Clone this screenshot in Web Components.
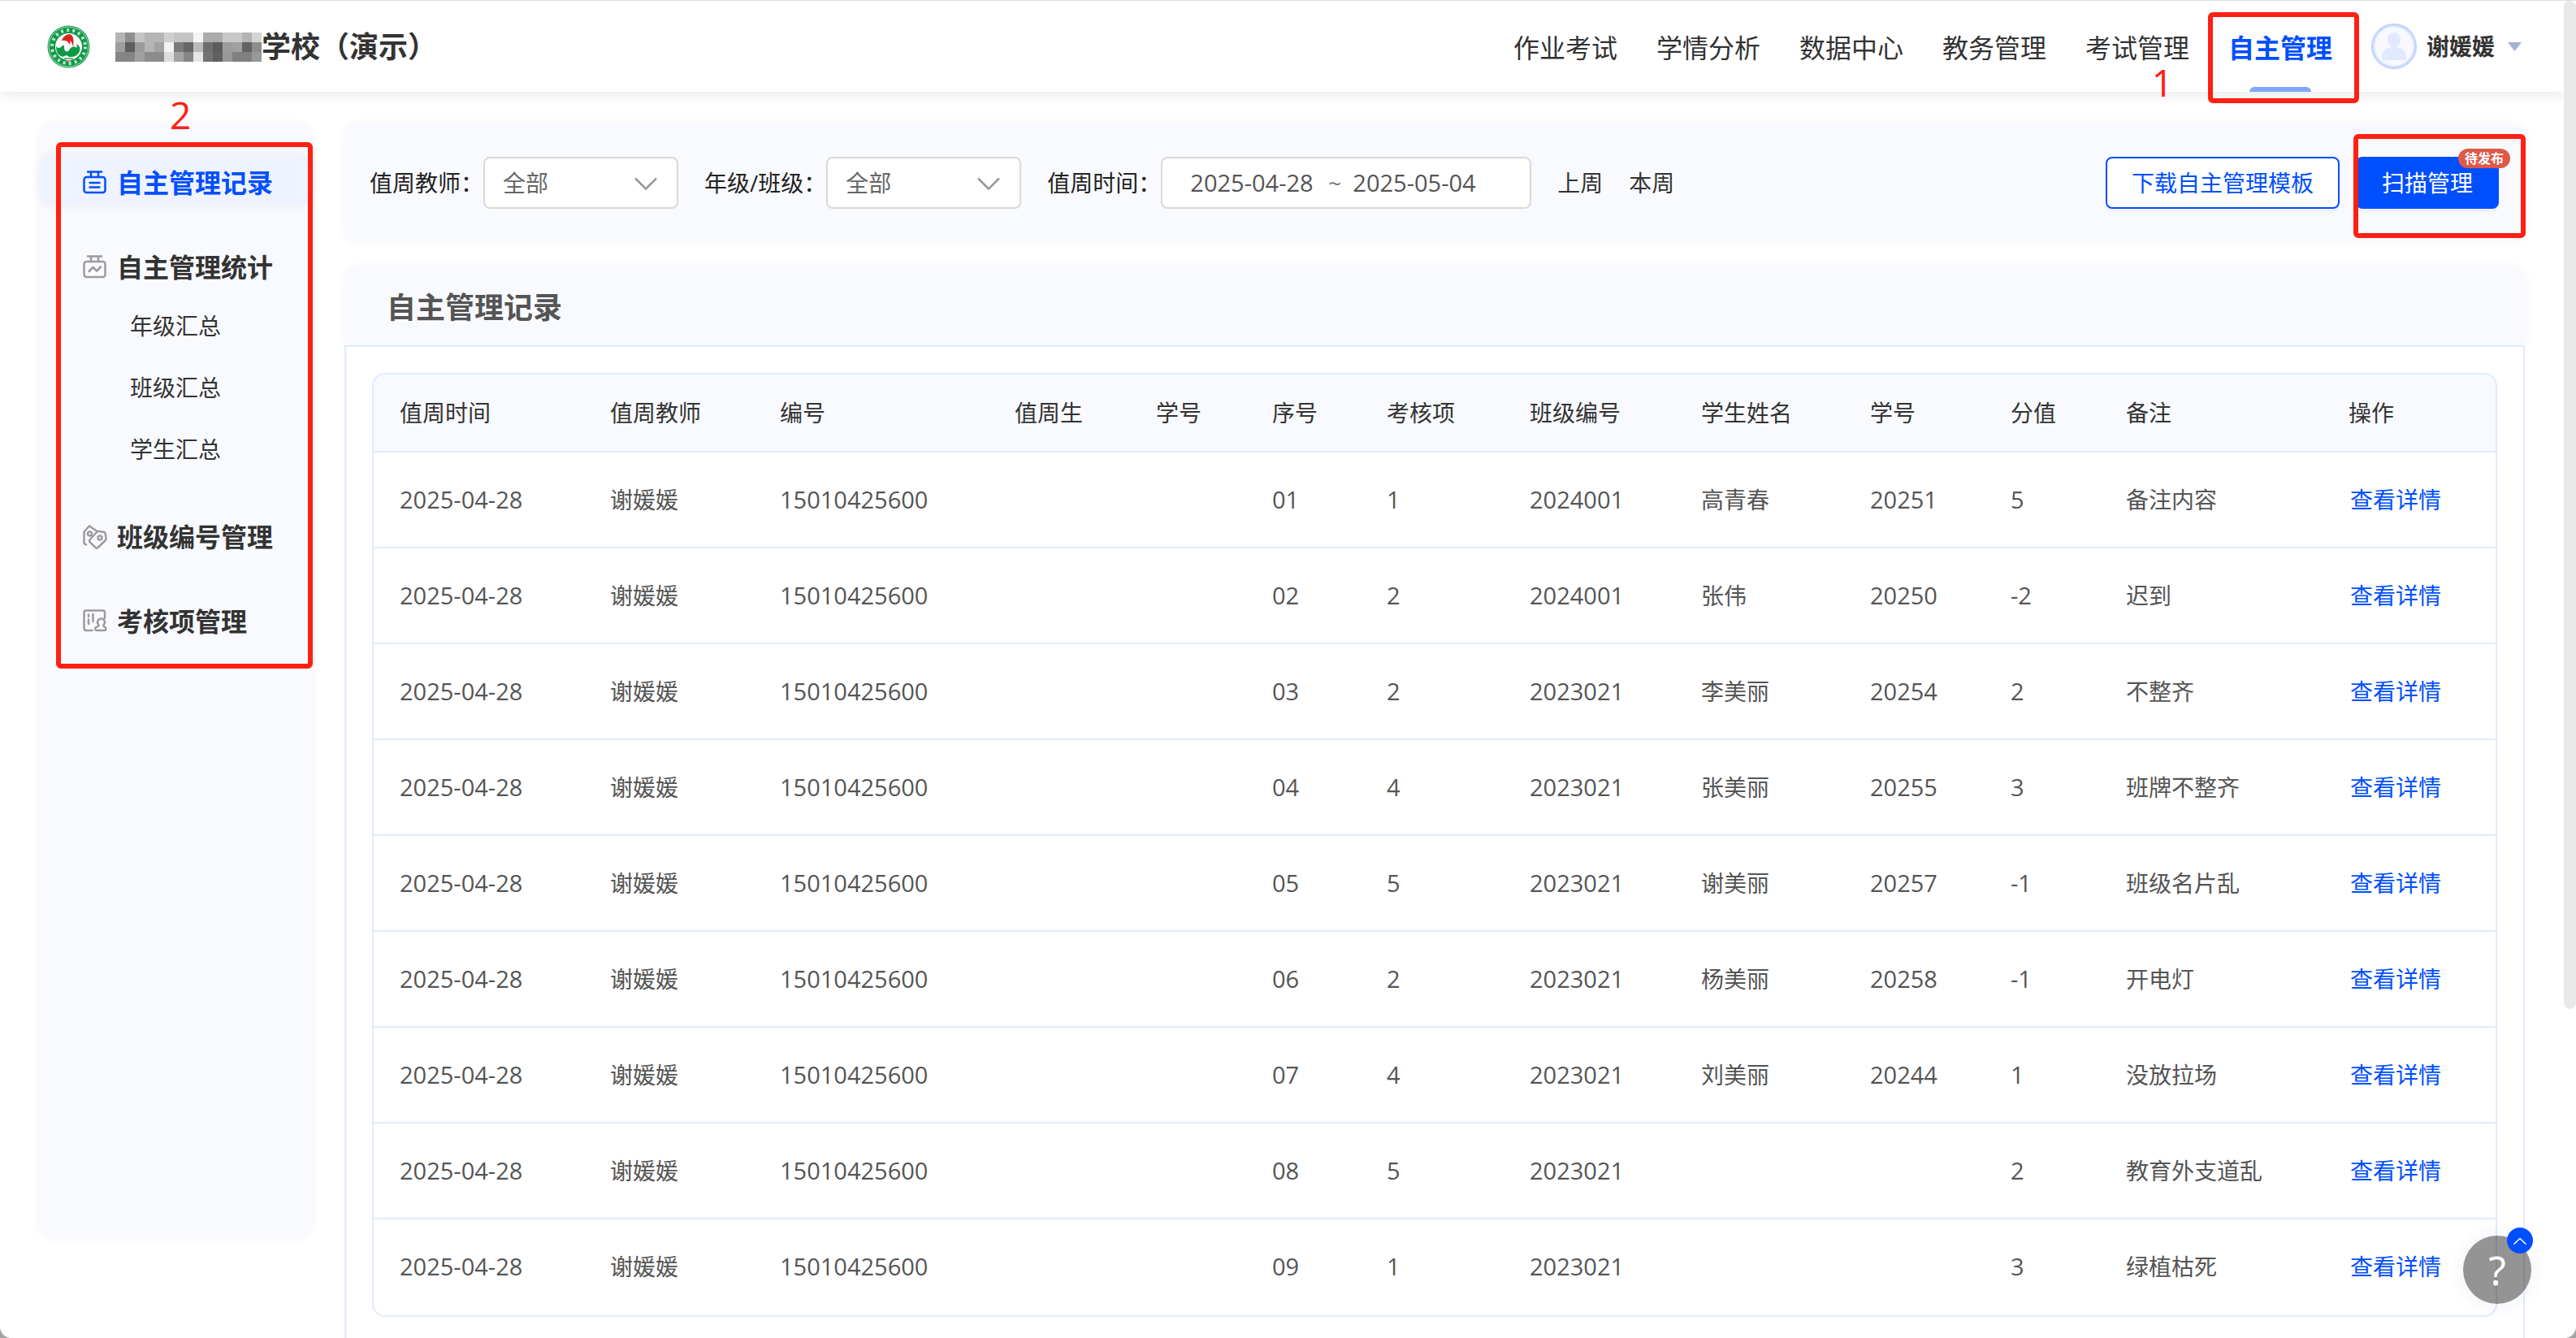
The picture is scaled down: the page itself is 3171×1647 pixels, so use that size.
<!DOCTYPE html>
<html lang="zh-CN">
<head>
<meta charset="UTF-8">
<meta name="viewport" content="width=device-width, initial-scale=1.0">
<title>自主管理记录</title>
<style>
  :root {
    --blue: #004fff;
    --line: #e1eaff;
    --panel: #f9faff;
    --text: #333;
    --text-sub: #555;
    --mark: #ff2012;
    --fs-md: 28px;
    --fs-num: 29px;
    --fs-lg: 32px;
    --fs-xl: 36px;
    --panel-shadow: 0 0 12px rgba(0, 0, 0, 0.05);
  }

  html {
    background: #a3a3a3;
  }

  body {
    margin: 0;
    color: var(--text);
    font-family: "Open Sans", "Noto Sans CJK SC", sans-serif;
    font-size: var(--fs-md);
    line-height: 40px;
  }
</style>
</head>
<body>
<app-shell>
  <app-header slot="header" school="学校（演示）" user="谢媛媛">
    <nav-link>作业考试</nav-link>
    <nav-link>学情分析</nav-link>
    <nav-link>数据中心</nav-link>
    <nav-link>教务管理</nav-link>
    <nav-link>考试管理</nav-link>
    <nav-link active>自主管理</nav-link>
  </app-header>

  <side-menu slot="side">
    <menu-item icon="record" active>自主管理记录</menu-item>
    <menu-item icon="chart">自主管理统计
      <sub-item slot="sub">年级汇总</sub-item>
      <sub-item slot="sub">班级汇总</sub-item>
      <sub-item slot="sub">学生汇总</sub-item>
    </menu-item>
    <menu-item icon="tags">班级编号管理</menu-item>
    <menu-item icon="board">考核项管理</menu-item>
  </side-menu>

  <filter-bar>
    <filter-select label="值周教师："></filter-select>
    <filter-select label="年级/班级："></filter-select>
    <date-range label="值周时间：" start="2025-04-28" end="2025-05-04"></date-range>
    <text-button>上周</text-button>
    <text-button>本周</text-button>
    <action-button slot="actions">下载自主管理模板</action-button>
    <action-button slot="actions" primary badge="待发布">扫描管理</action-button>
  </filter-bar>
  <record-panel heading="自主管理记录">
    <record-table></record-table>
  </record-panel>

  <help-button slot="float"></help-button>
</app-shell>

<script>
// 菜单图标
const icons = {
  record: `
    <rect x="1.5" y="8" width="26" height="19" rx="3"/>
    <path d="M6 1.5h17M10 2v6M19 2v6M8.5 15h12M8.5 20.5h12"/>`,
  chart: `
    <rect x="1.5" y="8" width="26" height="19" rx="3"/>
    <path d="M6 1.5h17M10 2v6M19 2v6M7.500 20l5-5 4.5 4.5 5-5"/>`,
  tags: `
    <path d="M4 24.5L1.5 23V8.5L8 1.5 16 7"/>
    <path d="M17.5 8.5Q18.5 7.5 20 8L26 9Q27.500 9.500 27.8 11L28.500 17Q28.5 18.5 27.500 19.5L18.5 28Q17 29.2 15.6 28L8.5 21.2Q7.5 20 8.5 18.5Z"/>
    <circle cx="8.500" cy="11" r="2.5"/>
    <circle cx="21" cy="16" r="2.5"/>`,
  board: `
    <path d="M27 11V4q0-2.500-2.500-2.500H4Q1.5 1.5 1.5 4v19q0 3 2.500 3h7.500M7 6.5v2.5M7 12.500v5.500M12.500 6v9"/>
    <path d="M19.5 19q-2.500-2-1-5 1.500-2.500 4-2.500t4 2.500q1.500 3-1 5v2l2.500 1.500q1 3.500-1.500 3.500h-9q-3 0-2-3.500l4-2Z"/>`
};

const records = [
  ['01', '1', '2024001', '高青春', '20251', '5', '备注内容'],
  ['02', '2', '2024001', '张伟', '20250', '-2', '迟到'],
  ['03', '2', '2023021', '李美丽', '20254', '2', '不整齐'],
  ['04', '4', '2023021', '张美丽', '20255', '3', '班牌不整齐'],
  ['05', '5', '2023021', '谢美丽', '20257', '-1', '班级名片乱'],
  ['06', '2', '2023021', '杨美丽', '20258', '-1', '开电灯'],
  ['07', '4', '2023021', '刘美丽', '20244', '1', '没放拉场'],
  ['08', '5', '2023021', '', '', '2', '教育外支道乱'],
  ['09', '1', '2023021', '', '', '3', '绿植枯死']
];

// 学校名称前的灰色马赛克
const mosaic = [
  ['b5', '8e', 'c4', 'b5', 'b5', 'd0', 'c4', 'c4', 'f5', 'ab', 'ab', 'c8', 'c8', 'b4', 'd5'],
  ['9e', '5e', '9a', 'b5', 'a3', 'f3', '7a', '66', 'bb', '6d', '5c', '9c', 'a0', '63', '8c'],
  ['85', '85', 'a0', '8c', '8c', 'dd', 'a3', '86', 'e6', '72', '60', '98', '80', '80', '98']
];

class BaseElement extends HTMLElement {
  constructor() {
    super();
    this.attachShadow({ mode: 'open' });
  }

  connectedCallback() {
    this.shadowRoot.innerHTML = this.render();
  }
}

class AppShell extends BaseElement {
  render() {
    return `
      <style>
        :host {
          display: flex;
          height: 100vh;
          overflow: hidden;
          position: relative;
          box-sizing: border-box;
          border-top: 1px solid #dedede;
          border-radius: 0 0 14px 14px;
          background: #fff;
        }
        .page { flex: 1; min-width: 0; }
        .body { display: flex; align-items: flex-start; gap: 40px; padding: 40px 48px; }
        main { flex: 1; min-width: 0; display: flex; flex-direction: column; gap: 32px; }
        .scroll { width: 15px; height: 75.4%; border-radius: 8px; background: #e9e9e9; }
      </style>
      <div class="page">
        <slot name="header"></slot>
        <div class="body">
          <slot name="side"></slot>
          <main><slot></slot></main>
        </div>
      </div>
      <div class="scroll"></div>
      <slot name="float"></slot>
    `;
  }
}

// 红色标注框
class MarkFrame extends BaseElement {
  render() {
    return `
      <style>
        :host {
          display: block;
          position: absolute;
          z-index: 5;
          box-sizing: border-box;
          border: 6px solid var(--mark);
          border-radius: 6px;
          pointer-events: none;
        }
      </style>
    `;
  }
}

class AppHeader extends BaseElement {
  render() {
    const cells = mosaic.map((row, y) => row.map((c, x) =>
      `<rect x="${x * 12}" y="${y * 12}" width="12" height="12" fill="#${c}${c}${c}"/>`
    ).join('')).join('');

    return `
      <style>
        :host {
          display: flex;
          align-items: center;
          height: 112px;
          padding: 0 52px 0 48px;
          background: #fff;
          box-shadow: 0 4px 14px rgba(20, 40, 80, 0.1);
        }
        .logo { width: 72px; display: flex; justify-content: center; }
        h1 {
          display: flex;
          align-items: center;
          margin: 0 auto 0 22px;
          padding-top: 2px;
          font-size: var(--fs-xl);
          line-height: 48px;
        }
        nav { display: flex; gap: 48px; height: 112px; }
        .user {
          display: flex;
          align-items: center;
          margin-left: 48px;
          padding: 0;
          border: 0;
          background: none;
          color: inherit;
          font: bold var(--fs-md)/40px "Open Sans", "Noto Sans CJK SC", sans-serif;
        }
        .user span { margin: 0 16px 0 12px; }
      </style>
      <div class="logo">
        <svg width="53" height="53" viewBox="0 0 53 53" fill="none">
          <circle cx="26.5" cy="26.5" r="26" fill="#0f9a48"/>
          <circle cx="26.5" cy="26.5" r="24.5" stroke="#d8f0e0" stroke-width="0.8"/>
          <circle cx="26.5" cy="26.5" r="20.5" stroke="#bfe5cc" stroke-width="4" stroke-dasharray="3 4.2"/>
          <circle cx="26.5" cy="26.5" r="16.5" fill="#fff"/>
          <path d="M11 26q3 4 7 0 3-3 3 1 0 7 5 5l3-4q4-3 6-1 3 2 1-4 6 3 4 9-3 8-13 7l-3-2-5 2Q11 37 11 26z" fill="#0f9a48"/>
          <path d="M18 19q3-8 10-8 6 2 4 16-1-6-4-8 1 3 0 5-3-6-10-5z" fill="#d9251c"/>
          <path d="M21 41h11" stroke="#6bb98a" stroke-width="2"/>
          <path d="M24 44h5" stroke="#e08a80" stroke-width="2"/>
        </svg>
      </div>
      <h1>
        <svg width="180" height="36" viewBox="0 0 180 36" aria-hidden="true">${cells}</svg>
        ${this.getAttribute('school')}
      </h1>
      <nav><slot></slot></nav>
      <button class="user">
        <svg width="56" height="56" viewBox="0 0 56 56">
          <circle cx="28" cy="28" r="27" fill="#fff" stroke="#bcd0fb" stroke-width="2"/>
          <circle cx="28" cy="28" r="25" fill="#f7f9ff" stroke="#d3e0fd" stroke-width="2"/>
          <rect x="20" y="11" width="16" height="18" rx="8" fill="#e0e9ff"/>
          <path d="M13 42q0-13 15-13t15 13q0 3-3 3H16q-3 0-3-3z" fill="#e0e9ff"/>
        </svg>
        <span>${this.getAttribute('user')}</span>
        <svg width="17" height="11" viewBox="0 0 17 11"><path d="M0 0h17l-8.5 11z" fill="#a6b3cf"/></svg>
      </button>
    `;
  }
}

class NavLink extends BaseElement {
  render() {
    const active = this.hasAttribute('active');
    return `
      <style>
        :host { display: block; position: relative; font-size: var(--fs-lg); }
        a { display: block; padding-top: 38px; color: var(--text); text-decoration: none; line-height: 40px; }
        :host([active]) a { color: var(--blue); font-weight: bold; }
        .bar {
          position: absolute;
          left: 26px;
          right: 26px;
          bottom: 0;
          height: 6px;
          border-radius: 6px 6px 0 0;
          background: #80a7ff;
        }
        mark-frame { inset: 14px -33px -14px -25px; }
        .step { position: absolute; right: 100%; top: 80px; margin-right: 68px; color: var(--mark); font-size: 46px; line-height: 40px; }
      </style>
      <a href="#"><slot></slot></a>
      ${active ? '<i class="bar"></i><mark-frame></mark-frame><span class="step">1</span>' : ''}
    `;
  }
}

class SideMenu extends BaseElement {
  render() {
    return `
      <style>
        :host {
          display: block;
          position: relative;
          flex: 0 0 336px;
          box-sizing: border-box;
          min-height: calc(100vh - 277px);
          padding-top: 36px;
          border-radius: 16px;
          background: var(--panel);
          box-shadow: var(--panel-shadow);
        }
        nav { display: flex; flex-direction: column; gap: 40px; position: relative; }
        mark-frame { inset: -14px -1px -30px 21px; }
        .step { position: absolute; left: 161px; top: -37px; color: var(--mark); font-size: 46px; line-height: 50px; }
      </style>
      <span class="step">2</span>
      <nav><slot></slot><mark-frame></mark-frame></nav>
    `;
  }
}

class MenuItem extends BaseElement {
  render() {
    return `
      <style>
        :host { display: block; }
        a {
          display: flex;
          align-items: center;
          gap: 12px;
          height: 64px;
          box-sizing: border-box;
          padding: 7px 0 0 54px;
          border-radius: 16px;
          color: var(--text);
          font-size: var(--fs-lg);
          font-weight: bold;
          text-decoration: none;
        }
        svg { color: #9c9c9c; }
        :host([active]) a { color: var(--blue); background: #eff3ff; box-shadow: 0 0 12px rgba(0, 0, 0, 0.05); }
        :host([active]) svg { color: var(--blue); }
        .sub { display: block; padding-top: 6px; margin-bottom: -6px; }
        .sub:not(.has) { display: none; }
      </style>
      <a href="#">
        <svg width="30" height="30" viewBox="0 0 30 30" fill="none" stroke="currentColor"
          stroke-width="2.5" stroke-linecap="round" stroke-linejoin="round">${icons[this.getAttribute('icon')]}</svg>
        <span><slot></slot></span>
      </a>
      <div class="sub ${this.querySelector('sub-item') ? 'has' : ''}"><slot name="sub"></slot></div>
    `;
  }
}

class SubItem extends BaseElement {
  render() {
    return `
      <style>
        :host { display: block; }
        a { display: block; padding-left: 112px; color: var(--text); line-height: 76px; text-decoration: none; }
      </style>
      <a href="#"><slot></slot></a>
    `;
  }
}

class FilterBar extends BaseElement {
  render() {
    return `
      <style>
        :host {
          display: flex;
          align-items: center;
          justify-content: space-between;
          padding: 40px 32px 40px 31px;
          border-radius: 16px;
          background: var(--panel);
          box-shadow: var(--panel-shadow);
        }
        .fields { display: flex; align-items: center; gap: 32px; }
        .actions { display: flex; gap: 20px; position: relative; }
        mark-frame { width: 212px; top: -28px; bottom: -36px; right: -33px; }
      </style>
      <div class="fields"><slot></slot></div>
      <div class="actions"><slot name="actions"></slot><mark-frame></mark-frame></div>
    `;
  }
}

class FilterSelect extends BaseElement {
  render() {
    return `
      <style>
        :host { display: flex; align-items: center; color: #222; }
        .box { display: flex; position: relative; }
        select {
          width: 240px;
          height: 64px;
          padding: 0 22px;
          border: 2px solid #d9d9d9;
          border-radius: 8px;
          background: #fff;
          color: #666;
          font: inherit;
          appearance: none;
        }
        svg { position: absolute; right: 26px; top: 25px; pointer-events: none; }
      </style>
      <label for="field">${this.getAttribute('label')}</label>
      <div class="box">
        <select id="field"><option>全部</option></select>
        <svg width="28" height="16" viewBox="0 0 28 16" fill="none" stroke="#999" stroke-width="2.5">
          <path d="M1 1.5l13 13 13-13"/>
        </svg>
      </div>
    `;
  }
}

class DateRange extends BaseElement {
  render() {
    return `
      <style>
        :host { display: flex; align-items: center; color: #222; }
        .box {
          display: flex;
          align-items: center;
          gap: 14px;
          width: 456px;
          height: 64px;
          box-sizing: border-box;
          padding: 0 34px;
          border: 2px solid #d9d9d9;
          border-radius: 8px;
          background: #fff;
          color: #777;
        }
        input {
          width: 156px;
          padding: 0;
          border: 0;
          background: none;
          color: var(--text-sub);
          font: inherit;
          font-size: var(--fs-num);
        }
      </style>
      <label for="start">${this.getAttribute('label')}</label>
      <div class="box">
        <input id="start" type="text" value="${this.getAttribute('start')}">
        <span>~</span>
        <input type="text" aria-label="结束日期" value="${this.getAttribute('end')}">
      </div>
    `;
  }
}

class TextButton extends BaseElement {
  render() {
    return `
      <style>
        :host { display: block; }
        button { padding: 0; border: 0; background: none; color: var(--text); font: inherit; }
      </style>
      <button><slot></slot></button>
    `;
  }
}

class ActionButton extends BaseElement {
  render() {
    const badge = this.getAttribute('badge');
    return `
      <style>
        :host { display: block; position: relative; }
        button {
          height: 64px;
          padding: 0 30px;
          border: 2px solid var(--blue);
          border-radius: 8px;
          background: #fff;
          color: var(--blue);
          font: inherit;
          box-shadow: 0 4px 0 rgba(0, 0, 0, 0.03);
        }
        :host([primary]) button { background: var(--blue); color: #fff; }
        .badge {
          position: absolute;
          top: -10px;
          right: -14px;
          padding: 0 8px;
          border-radius: 12px;
          background: #de5948;
          color: #fff;
          font-size: 16px;
          font-weight: bold;
          line-height: 24px;
        }
      </style>
      <button><slot></slot></button>
      ${badge ? `<span class="badge">${badge}</span>` : ''}
    `;
  }
}

class RecordPanel extends BaseElement {
  render() {
    return `
      <style>
        :host { display: block; }
        h2 {
          margin: 0;
          padding: 26px 52px 22px;
          border-radius: 16px 16px 0 0;
          background: var(--panel);
          box-shadow: var(--panel-shadow);
          color: var(--text-sub);
          font-size: var(--fs-xl);
          line-height: 48px;
        }
        .content { padding: 32px 32px 100px; border: 2px solid var(--line); background: #fff; position: relative; }
      </style>
      <h2>${this.getAttribute('heading')}</h2>
      <div class="content"><slot></slot></div>
    `;
  }
}

class RecordTable extends BaseElement {
  render() {
    const widths = [259, 209, 289, 174, 143, 141, 176, 211, 208, 173, 142, 274, 213];
    const heads = ['值周时间', '值周教师', '编号', '值周生', '学号', '序号', '考核项', '班级编号', '学生姓名', '学号', '分值', '备注', '操作'];
    const rows = records.map(([no, item, cls, name, sid, score, note]) => {
      const cells = ['2025-04-28', '谢媛媛', '15010425600', '', '', no, item, cls, name, sid, score, note];
      return `<tr>${cells.map(c => `<td${/^[-\d]/.test(c) ? ' class="num"' : ''}>${c}</td>`).join('')}<td><a href="#">查看详情</a></td></tr>`;
    }).join('');

    return `
      <style>
        :host { display: block; border: 2px solid var(--line); border-radius: 16px; overflow: hidden; }
        table { width: 100%; table-layout: fixed; border-collapse: separate; border-spacing: 0; }
        th, td {
          box-sizing: border-box;
          padding: 0 0 0 32px;
          text-align: left;
          font-weight: normal;
          white-space: nowrap;
          border-bottom: 2px solid var(--line);
        }
        th { height: 96px; background: var(--panel); }
        td { height: 118px; color: var(--text-sub); }
        tr:last-child td { border-bottom: 0; padding-bottom: 2px; }
        .num { font-size: var(--fs-num); }
        a { color: var(--blue); text-decoration: none; }
        td:last-child { padding-left: 34px; }
      </style>
      <table>
        <colgroup>${widths.map(w => `<col style="width:${w}px">`).join('')}</colgroup>
        <thead><tr>${heads.map(h => `<th>${h}</th>`).join('')}</tr></thead>
        <tbody>${rows}</tbody>
      </table>
    `;
  }
}

class HelpButton extends BaseElement {
  render() {
    return `
      <style>
        :host { display: block; position: absolute; right: 55px; bottom: 42px; }
        button { padding: 0; border: 0; border-radius: 50%; color: #fff; }
        .help {
          display: block;
          width: 84px;
          height: 84px;
          background: rgba(0, 0, 0, 0.42);
          box-shadow: 0 0 24px rgba(0, 50, 150, 0.08);
          font: 50px/84px "Noto Sans", sans-serif;
        }
        .top {
          display: flex;
          align-items: center;
          justify-content: center;
          position: absolute;
          top: -10px;
          right: -2px;
          width: 32px;
          height: 32px;
          background: var(--blue);
        }
      </style>
      <button class="help">?</button>
      <button class="top" aria-label="返回顶部">
        <svg width="16" height="9" viewBox="0 0 16 9" fill="none" stroke="#fff" stroke-width="1.5"><path d="M0.5 8.5l7.5-7 7.5 7"/></svg>
      </button>
    `;
  }
}

customElements.define('mark-frame', MarkFrame);
customElements.define('app-shell', AppShell);
customElements.define('app-header', AppHeader);
customElements.define('nav-link', NavLink);
customElements.define('side-menu', SideMenu);
customElements.define('menu-item', MenuItem);
customElements.define('sub-item', SubItem);
customElements.define('filter-bar', FilterBar);
customElements.define('filter-select', FilterSelect);
customElements.define('date-range', DateRange);
customElements.define('text-button', TextButton);
customElements.define('action-button', ActionButton);
customElements.define('record-panel', RecordPanel);
customElements.define('record-table', RecordTable);
customElements.define('help-button', HelpButton);
</script>
</body>
</html>
